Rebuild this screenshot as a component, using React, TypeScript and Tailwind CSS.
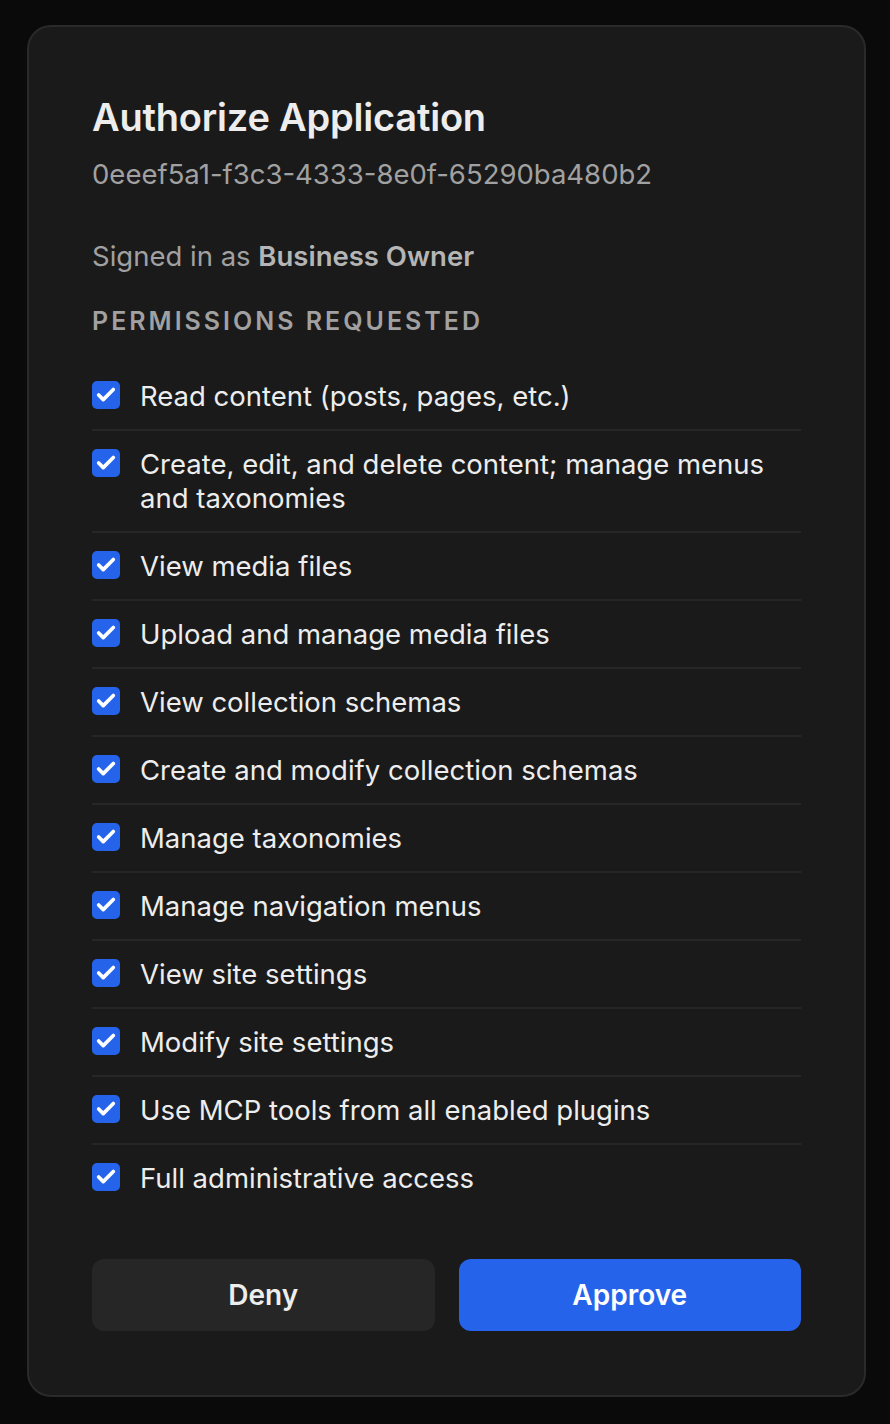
import { Check } from "lucide-react";

const permissions = [
  "Read content (posts, pages, etc.)",
  "Create, edit, and delete content; manage menus and taxonomies",
  "View media files",
  "Upload and manage media files",
  "View collection schemas",
  "Create and modify collection schemas",
  "Manage taxonomies",
  "Manage navigation menus",
  "View site settings",
  "Modify site settings",
  "Use MCP tools from all enabled plugins",
  "Full administrative access",
];

const App = () => {
  return (
    <div
      className="min-h-screen w-full bg-[#0a0a0a] pl-[27px] pr-[24px] pt-[25px] pb-[28px]"
      style={{ fontFamily: "Inter, 'Noto Sans', sans-serif" }}
    >
      <div className="rounded-[24px] border-2 border-[#2a2a2a] bg-[#1a1a1a] px-[63px] pt-[66px] pb-[64px]">
        <h1 className="text-[38px] leading-[48px] font-semibold tracking-[-0.2px] text-[#ededed]">
          Authorize Application
        </h1>
        <p className="mt-[16px] text-[27.5px] leading-[34px] text-[#a1a1a1]">
          0eeef5a1-f3c3-4333-8e0f-65290ba480b2
        </p>

        <p className="mt-[48px] text-[27.5px] leading-[34px] text-[#a1a1a1]">
          Signed in as{" "}
          <span className="font-semibold text-[#b5b5b5]">Business Owner</span>
        </p>

        <h2 className="mt-[32px] text-[25px] leading-[32px] font-semibold uppercase tracking-[3px] text-[#a1a1a1]">
          Permissions Requested
        </h2>

        <ul className="mt-[26px]">
          {permissions.map((label, i) => (
            <li
              key={label}
              className={`flex items-start gap-[20px] py-[16px] ${
                i < permissions.length - 1 ? "border-b-2 border-[#262626]" : ""
              }`}
            >
              <span className="mt-[2px] flex h-[28px] w-[28px] shrink-0 items-center justify-center rounded-[5px] bg-[#2563eb]">
                <Check className="h-[22px] w-[22px] text-white" strokeWidth={4} />
              </span>
              <span className="text-[27.5px] leading-[34px] text-[#ededed]">
                {label}
              </span>
            </li>
          ))}
        </ul>

        <div className="mt-[48px] grid grid-cols-2 gap-[24px]">
          <button
            type="button"
            className="h-[72px] rounded-[12px] bg-[#262626] text-[28px] font-semibold text-[#ededed]"
          >
            Deny
          </button>
          <button
            type="button"
            className="h-[72px] rounded-[12px] bg-[#2563eb] text-[28px] font-semibold text-white"
          >
            Approve
          </button>
        </div>
      </div>
    </div>
  );
};

export default App;
